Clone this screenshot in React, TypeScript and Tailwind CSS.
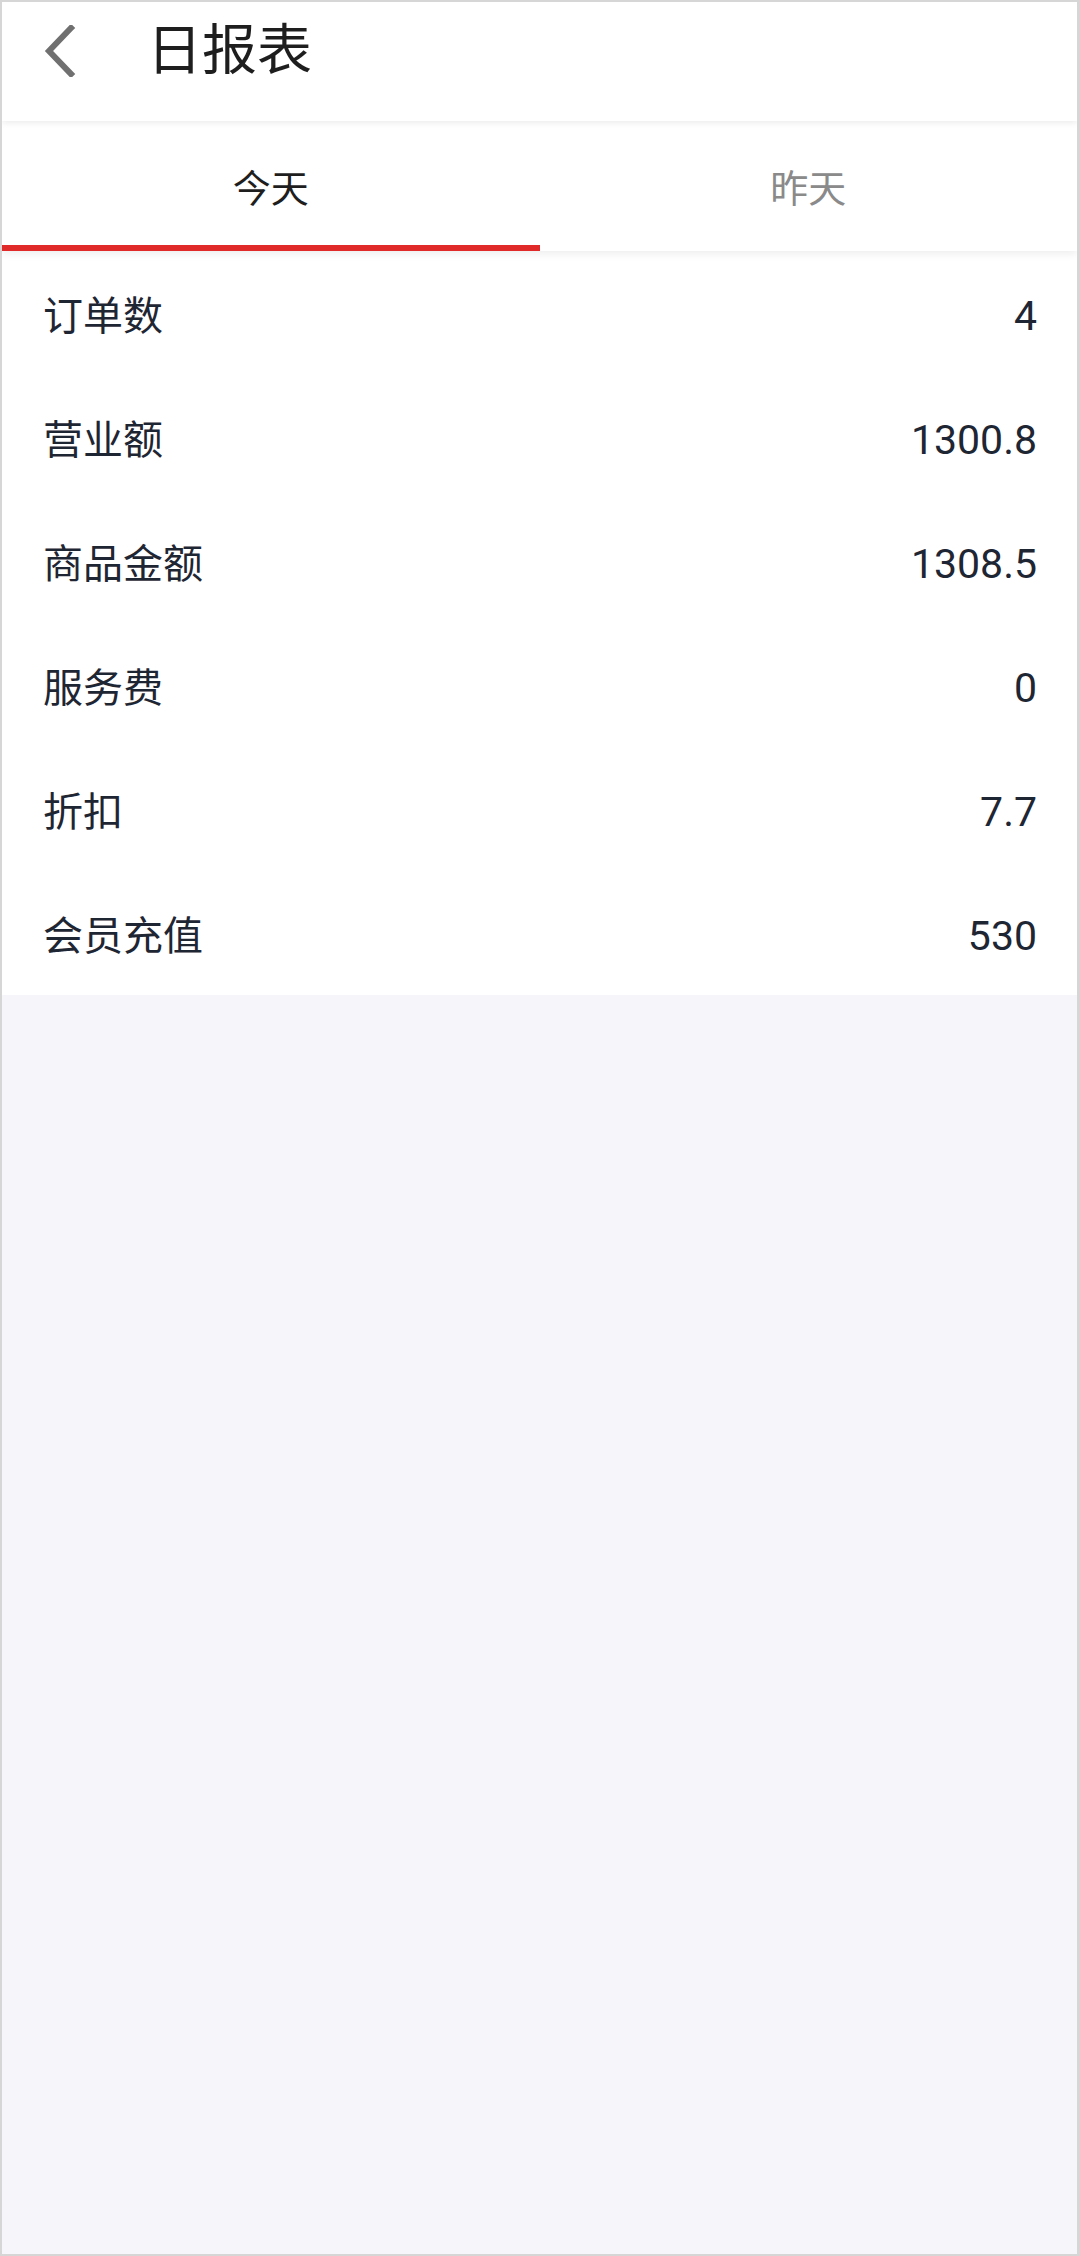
const rows = [
  { label: '订单数', value: '4' },
  { label: '营业额', value: '1300.8' },
  { label: '商品金额', value: '1308.5' },
  { label: '服务费', value: '0' },
  { label: '折扣', value: '7.7' },
  { label: '会员充值', value: '530' },
];

function BackIcon() {
  return (
    <svg width="32" height="52" viewBox="0 0 32 52" fill="none">
      <path d="M27 3 L5 26 L27 49" stroke="#707070" strokeWidth="6" strokeLinecap="square" />
    </svg>
  );
}

export default function App() {
  return (
    <div
      className="w-[1080px] h-[2256px] flex flex-col bg-[#f5f5fa] border-t-2 border-l-2 border-b-2 border-r-[3px] border-[#d6d6d6] overflow-hidden"
      style={{ fontFamily: 'Roboto, "Noto Sans CJK SC", sans-serif' }}
    >
      <header className="relative z-20 h-[119px] bg-white shadow-[0_2px_6px_rgba(0,0,0,0.08)]">
        <div className="h-[96px] flex items-center">
          <button className="ml-[42px] mt-[1px] flex items-center">
            <BackIcon />
          </button>
          <h1 className="ml-[71px] text-[55px] leading-none text-[#1e1e1e]">日报表</h1>
        </div>
      </header>

      <nav className="relative z-10 h-[130px] flex bg-white shadow-[0_3px_8px_rgba(0,0,0,0.07)]">
        <button className="flex-1 flex items-center justify-center pt-[12px] border-b-[6px] border-[#e02a2a] text-[38px] text-[#1e1e1e]">
          今天
        </button>
        <button className="flex-1 flex items-center justify-center pt-[12px] border-b-[6px] border-transparent text-[38px] text-[#8a8a8a]">
          昨天
        </button>
      </nav>

      <div className="bg-white">
        {rows.map(row => (
          <div key={row.label} className="h-[124px] flex items-center justify-between pt-[8px] pl-[41px] pr-[40px] text-[#1f2633]">
            <span className="text-[40px]">{row.label}</span>
            <span className="text-[41px]">{row.value}</span>
          </div>
        ))}
      </div>
    </div>
  );
}
